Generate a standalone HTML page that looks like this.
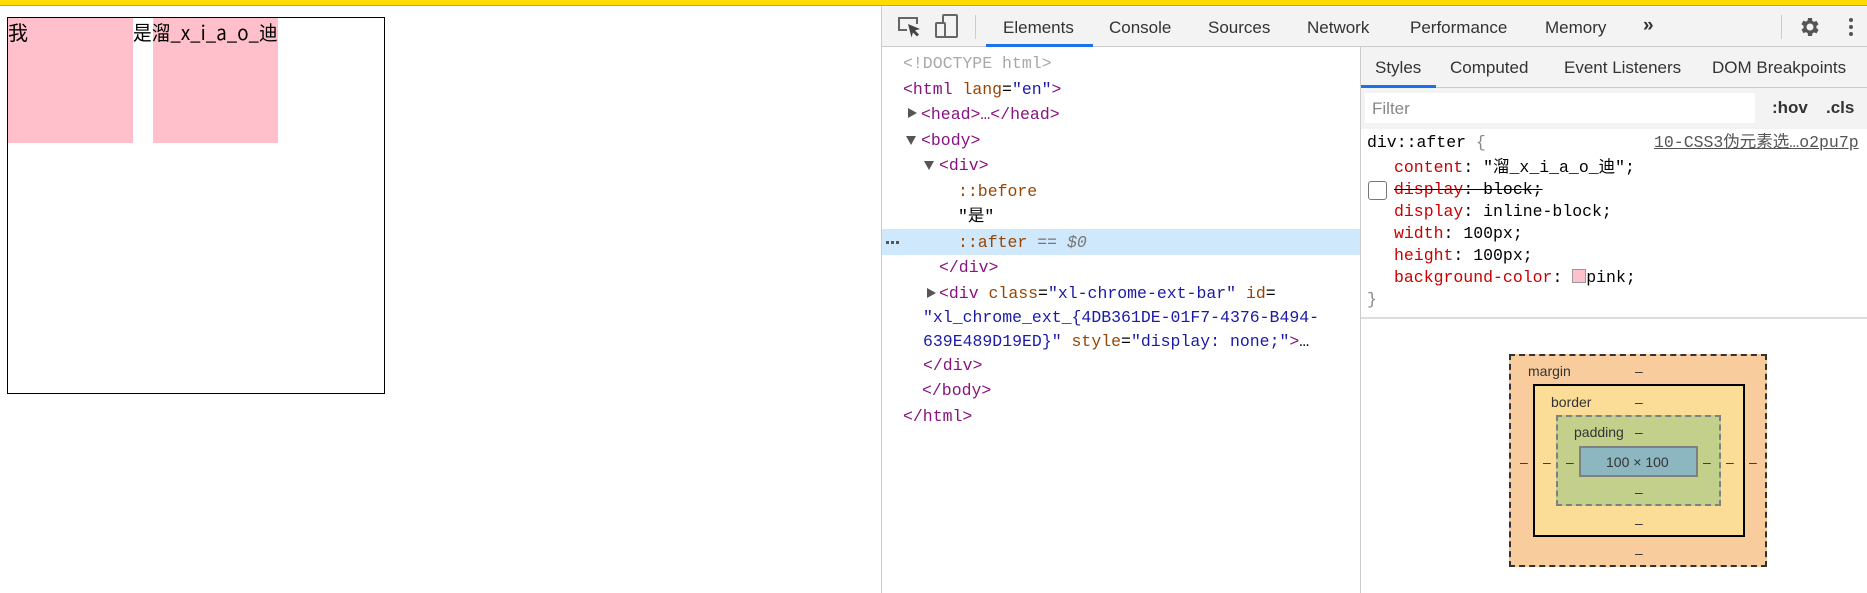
<!DOCTYPE html>
<html><head><meta charset="utf-8"><style>
*{margin:0;padding:0;box-sizing:border-box}
body{width:1867px;height:593px;overflow:hidden;background:#fff;position:relative;font-family:"Liberation Sans","Noto Sans CJK SC",sans-serif}
.a{position:absolute;white-space:pre}
.m{font-family:"Liberation Mono","Noto Sans CJK SC",monospace;font-size:16.5px;line-height:20px}
.t{font-size:17px;color:#333;line-height:20px}
.tag{color:#881280}.br{color:#a8a8a8}.at{color:#994500}.av{color:#1a1aa6}.pn{color:#c80000}
.tri{position:absolute;width:0;height:0}
.r{border-left:9px solid #555;border-top:5px solid transparent;border-bottom:5px solid transparent}
.d{border-top:9px solid #555;border-left:5px solid transparent;border-right:5px solid transparent}
.bm{position:absolute;font-size:14px;color:#333;line-height:16px}
</style></head><body>
<div class="a" style="left:0;top:0;width:1867px;height:6px;background:#ffdb00;border-bottom:1px solid #c9a800"></div>
<!-- page -->
<div class="a" style="left:7px;top:17px;width:378px;height:377px;border:1px solid #000"></div>
<div class="a" style="left:8px;top:18px;width:125px;height:125px;background:pink"></div>
<div class="a" style="left:153px;top:18px;width:125px;height:125px;background:pink"></div>
<div class="a" style="left:8px;top:20px;font-size:20px;line-height:24px;font-family:'Noto Sans CJK SC',sans-serif">我</div>
<div class="a" style="left:133px;top:20px;font-size:20px;line-height:24px;font-family:'Noto Sans CJK SC',sans-serif;transform:scaleX(0.935);transform-origin:0 0">是溜_x_i_a_o_迪</div>
<!-- devtools -->
<div class="a" style="left:881px;top:6px;width:986px;height:587px;background:#fff;border-left:1px solid #ccc"></div>
<div class="a" style="left:882px;top:7px;width:985px;height:40px;background:#f3f3f3;border-bottom:1px solid #ccc"></div>
<svg class="a" style="left:895px;top:14px" width="30" height="26" viewBox="0 0 30 26"><path d="M12 16H4V4h18v6" fill="none" stroke="#666" stroke-width="2"/><path d="M13 10l12 5-5 1.5 4 4-2 2-4-4-1.5 5z" fill="#444"/></svg>
<svg class="a" style="left:934px;top:12px" width="26" height="28" viewBox="0 0 26 28"><rect x="9" y="3" width="14" height="22" rx="1" fill="none" stroke="#666" stroke-width="2"/><rect x="2" y="11" width="9" height="14" rx="1" fill="#f3f3f3" stroke="#666" stroke-width="2"/></svg>
<div class="a" style="left:975px;top:15px;width:1px;height:24px;background:#ccc"></div>
<div class="a" style="left:986px;top:44px;width:107px;height:3px;background:#1a73e8"></div>
<div class="a t" style="left:1003px;top:18px">Elements</div>
<div class="a t" style="left:1109px;top:18px">Console</div>
<div class="a t" style="left:1208px;top:18px">Sources</div>
<div class="a t" style="left:1307px;top:18px">Network</div>
<div class="a t" style="left:1410px;top:18px">Performance</div>
<div class="a t" style="left:1545px;top:18px">Memory</div>
<div class="a t" style="left:1643px;top:16px;font-weight:bold;font-size:19px">»</div>
<div class="a" style="left:1781px;top:15px;width:1px;height:24px;background:#ccc"></div>
<svg class="a" style="left:1797px;top:15px" width="24" height="24" viewBox="0 0 24 24"><path fill="#555" d="M19.4 13a7.5 7.5 0 000-2l2.1-1.6-2-3.5-2.5 1a7.6 7.6 0 00-1.7-1L15 3h-4l-.4 2.6a7.6 7.6 0 00-1.7 1l-2.5-1-2 3.5L6.6 11a7.5 7.5 0 000 2l-2.1 1.6 2 3.5 2.5-1a7.6 7.6 0 001.7 1L11 21h4l.4-2.6a7.6 7.6 0 001.7-1l2.5 1 2-3.5zM13 15.5a3.5 3.5 0 110-7 3.5 3.5 0 010 7z"/></svg>
<div class="a" style="left:1849px;top:18px;width:4px;height:4px;border-radius:2px;background:#555;box-shadow:0 7px 0 #555,0 14px 0 #555"></div>
<!-- elements tree -->
<div class="a" style="left:882px;top:229px;width:478px;height:26px;background:#cfe8fc"></div>
<div class="a" style="left:886px;top:241px;width:3px;height:3px;background:#555;box-shadow:5px 0 #555,10px 0 #555"></div>
<div class="a m br" style="left:903px;top:54px">&lt;!DOCTYPE html&gt;</div>
<div class="a m" style="left:903px;top:80px"><span class="tag">&lt;html</span> <span class="at">lang</span>=<span class="av">"en"</span><span class="tag">&gt;</span></div>
<div class="tri r" style="left:908px;top:108px"></div>
<div class="a m tag" style="left:921px;top:105px">&lt;head&gt;…&lt;/head&gt;</div>
<div class="tri d" style="left:906px;top:136px"></div>
<div class="a m tag" style="left:921px;top:131px">&lt;body&gt;</div>
<div class="tri d" style="left:924px;top:161px"></div>
<div class="a m tag" style="left:939px;top:156px">&lt;div&gt;</div>
<div class="a m at" style="left:958px;top:182px">::before</div>
<div class="a m" style="left:958px;top:207px">"是"</div>
<div class="a m" style="left:958px;top:233px"><span class="at">::after</span> <span style="color:#777">== <i>$0</i></span></div>
<div class="a m tag" style="left:939px;top:258px">&lt;/div&gt;</div>
<div class="tri r" style="left:927px;top:288px"></div>
<div class="a m" style="left:939px;top:284px"><span class="tag">&lt;div</span> <span class="at">class</span>=<span class="av">"xl-chrome-ext-bar"</span> <span class="at">id</span>=</div>
<div class="a m av" style="left:923px;top:308px">"xl_chrome_ext_{4DB361DE-01F7-4376-B494-</div>
<div class="a m" style="left:923px;top:332px"><span class="av">639E489D19ED}"</span> <span class="at">style</span>=<span class="av">"display: none;"</span><span class="tag">&gt;</span>…</div>
<div class="a m tag" style="left:923px;top:356px">&lt;/div&gt;</div>
<div class="a m tag" style="left:922px;top:381px">&lt;/body&gt;</div>
<div class="a m tag" style="left:903px;top:407px">&lt;/html&gt;</div>
<!-- sidebar -->
<div class="a" style="left:1360px;top:47px;width:1px;height:546px;background:#ccc"></div>
<div class="a" style="left:1361px;top:47px;width:506px;height:41px;background:#f3f3f3;border-bottom:1px solid #ccc"></div>
<div class="a" style="left:1361px;top:85px;width:75px;height:3px;background:#1a73e8"></div>
<div class="a t" style="left:1375px;top:58px">Styles</div>
<div class="a t" style="left:1450px;top:58px">Computed</div>
<div class="a t" style="left:1564px;top:58px">Event Listeners</div>
<div class="a t" style="left:1712px;top:58px">DOM Breakpoints</div>
<div class="a" style="left:1361px;top:88px;width:506px;height:41px;background:#f3f3f3"></div>
<div class="a" style="left:1365px;top:93px;width:390px;height:30px;background:#fff"></div>
<div class="a t" style="left:1372px;top:99px;color:#888">Filter</div>
<div class="a t" style="left:1772px;top:98px;font-weight:bold">:hov</div>
<div class="a t" style="left:1826px;top:98px;font-weight:bold">.cls</div>
<div class="a m" style="left:1367px;top:133px">div::after <span style="color:#888">{</span></div>
<div class="a m" style="left:1654px;top:133px;color:#555;text-decoration:underline">10-CSS3伪元素选…o2pu7p</div>
<div class="a m" style="left:1394px;top:158px"><span class="pn">content</span>: "溜_x_i_a_o_迪";</div>
<div class="a" style="left:1368px;top:181px;width:19px;height:19px;border:1px solid #777;border-radius:3px"></div>
<div class="a m" style="left:1394px;top:180px;text-decoration:line-through"><span class="pn">display</span>: block;</div>
<div class="a m" style="left:1394px;top:202px"><span class="pn">display</span>: inline-block;</div>
<div class="a m" style="left:1394px;top:224px"><span class="pn">width</span>: 100px;</div>
<div class="a m" style="left:1394px;top:246px"><span class="pn">height</span>: 100px;</div>
<div class="a m" style="left:1394px;top:268px"><span class="pn">background-color</span>: <span style="display:inline-block;width:14px;height:14px;background:pink;border:1px solid #999;vertical-align:-1px"></span>pink;</div>
<div class="a m" style="left:1367px;top:290px;color:#888">}</div>
<div class="a" style="left:1361px;top:317px;width:506px;height:2px;background:#ddd"></div>
<!-- box model -->
<div class="a" style="left:1509px;top:354px;width:258px;height:213px;background:#f9cc9d;border:2px dashed #333"></div>
<div class="a" style="left:1533px;top:384px;width:212px;height:153px;background:#fbdd98;border:2px solid #000"></div>
<div class="a" style="left:1556px;top:415px;width:165px;height:91px;background:#c3d08b;border:2px dashed #808080"></div>
<div class="a" style="left:1579px;top:446px;width:119px;height:31px;background:#8cb6c0;border:2px solid #808080"></div>
<div class="bm" style="left:1528px;top:363px">margin</div>
<div class="bm" style="left:1551px;top:394px">border</div>
<div class="bm" style="left:1574px;top:424px">padding</div>
<div class="bm" style="left:1606px;top:454px">100 × 100</div>
<div class="bm" style="left:1635px;top:363px">–</div>
<div class="bm" style="left:1635px;top:394px">–</div>
<div class="bm" style="left:1635px;top:424px">–</div>
<div class="bm" style="left:1635px;top:484px">–</div>
<div class="bm" style="left:1635px;top:515px">–</div>
<div class="bm" style="left:1635px;top:545px">–</div>
<div class="bm" style="left:1520px;top:454px">–</div>
<div class="bm" style="left:1543px;top:454px">–</div>
<div class="bm" style="left:1566px;top:454px">–</div>
<div class="bm" style="left:1703px;top:454px">–</div>
<div class="bm" style="left:1726px;top:454px">–</div>
<div class="bm" style="left:1749px;top:454px">–</div>
</body></html>
